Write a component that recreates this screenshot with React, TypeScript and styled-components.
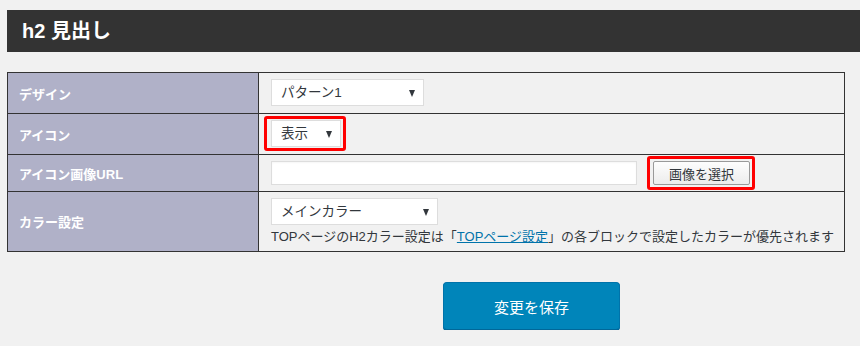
import React from 'react';
import styled, { createGlobalStyle } from 'styled-components';

const GlobalStyle = createGlobalStyle`
  html, body {
    margin: 0;
    padding: 0;
    background: #f1f1f1;
    font-family: "Liberation Sans", "Noto Sans CJK JP", sans-serif;
    color: #32373c;
  }
`;

const Page = styled.div`
  padding: 10px 0 0 7px;
`;

const SectionHeading = styled.h2`
  margin: 0;
  height: 42px;
  background: #333333;
  color: #fff;
  font-size: 20px;
  font-weight: bold;
  line-height: 42px;
  padding-left: 15px;
`;

const SettingsTable = styled.table`
  margin-top: 20px;
  width: 838px;
  table-layout: fixed;
  border-collapse: collapse;
  font-size: 13px;
`;

const LabelCol = styled.col`
  width: 251px;
`;

const Row = styled.tr<{ $height: number }>`
  height: ${(p) => p.$height}px;
`;

const LabelCell = styled.th`
  background: #b0b1c8;
  border: 1px solid #333;
  color: #fff;
  font-size: 13px;
  font-weight: bold;
  text-align: left;
  padding: 0 0 0 11px;
  vertical-align: middle;
`;

const ValueCell = styled.td`
  border: 1px solid #333;
  padding: 6px 12px;
  vertical-align: top;
`;

const SelectWrap = styled.div<{ $width: number }>`
  position: relative;
  display: inline-block;
  vertical-align: top;
  width: ${(p) => p.$width}px;
  height: 27px;
  &::after {
    content: '';
    position: absolute;
    right: 9px;
    top: 11px;
    border-left: 3.5px solid transparent;
    border-right: 3.5px solid transparent;
    border-top: 7px solid #32373c;
    pointer-events: none;
  }
`;

const Select = styled.select`
  appearance: none;
  box-sizing: border-box;
  width: 100%;
  height: 27px;
  margin: 0;
  padding: 0 24px 0 9px;
  border: 1px solid #ddd;
  background: #fff;
  font: 13.5px "Liberation Sans", "Noto Sans CJK JP", sans-serif;
  color: #32373c;
  border-radius: 0;
`;

const Highlight = styled.span<{ $inset: string }>`
  position: absolute;
  inset: ${(p) => p.$inset};
  border: 3px solid #ff0000;
  border-radius: 3px;
  pointer-events: none;
`;

const UrlRow = styled.div`
  display: flex;
  align-items: center;
  gap: 16px;
  height: 24px;
`;

const UrlInput = styled.input`
  box-sizing: border-box;
  width: 366px;
  height: 24px;
  margin: 0;
  border: 1px solid #ddd;
  background: #fff;
  box-shadow: inset 0 1px 2px rgba(0, 0, 0, 0.04);
`;

const MarkedButtonWrap = styled.span`
  position: relative;
  display: inline-block;
`;

const SecondaryButton = styled.button`
  box-sizing: border-box;
  width: 97px;
  height: 24px;
  margin: 0;
  border: 1px solid #999;
  border-radius: 2px;
  background: linear-gradient(#fdfdfd, #ececec);
  font: 13px "Liberation Sans", "Noto Sans CJK JP", sans-serif;
  color: #32373c;
  padding: 0;
`;

const Note = styled.p`
  margin: 4px 0 0;
  font-size: 13px;
  line-height: 16px;
  color: #32373c;
  white-space: nowrap;
`;

const NoteLink = styled.a`
  color: #0073aa;
  text-decoration: underline;
`;

const SubmitRow = styled.div`
  padding: 30px 0 0 436px;
`;

const PrimaryButton = styled.button`
  width: 177px;
  height: 48px;
  background: #0085ba;
  border: 1px solid #0073aa;
  border-bottom-color: #006799;
  box-shadow: 0 1px 0 #006799;
  border-radius: 4px;
  color: #fff;
  font: 15px "Liberation Sans", "Noto Sans CJK JP", sans-serif;
`;

export default function App() {
  return (
    <Page>
      <GlobalStyle />
      <SectionHeading>h2 見出し</SectionHeading>
      <SettingsTable>
        <colgroup>
          <LabelCol />
          <col />
        </colgroup>
        <tbody>
          <Row $height={41}>
            <LabelCell>デザイン</LabelCell>
            <ValueCell>
              <SelectWrap $width={153}>
                <Select defaultValue="p1">
                  <option value="p1">パターン1</option>
                </Select>
              </SelectWrap>
            </ValueCell>
          </Row>
          <Row $height={41}>
            <LabelCell>アイコン</LabelCell>
            <ValueCell>
              <SelectWrap $width={70}>
                <Select defaultValue="show">
                  <option value="show">表示</option>
                </Select>
                <Highlight $inset="-4px -5px -4px -7px" />
              </SelectWrap>
            </ValueCell>
          </Row>
          <Row $height={37}>
            <LabelCell>アイコン画像URL</LabelCell>
            <ValueCell>
              <UrlRow>
                <UrlInput type="text" />
                <MarkedButtonWrap>
                  <SecondaryButton>画像を選択</SecondaryButton>
                  <Highlight $inset="-5px -5px -5px -6px" />
                </MarkedButtonWrap>
              </UrlRow>
            </ValueCell>
          </Row>
          <Row $height={60}>
            <LabelCell>カラー設定</LabelCell>
            <ValueCell>
              <SelectWrap $width={167}>
                <Select defaultValue="main">
                  <option value="main">メインカラー</option>
                </Select>
              </SelectWrap>
              <Note>
                TOPページのH2カラー設定は「<NoteLink href="#">TOPページ設定</NoteLink>」の各ブロックで設定したカラーが優先されます
              </Note>
            </ValueCell>
          </Row>
        </tbody>
      </SettingsTable>
      <SubmitRow>
        <PrimaryButton>変更を保存</PrimaryButton>
      </SubmitRow>
    </Page>
  );
}
